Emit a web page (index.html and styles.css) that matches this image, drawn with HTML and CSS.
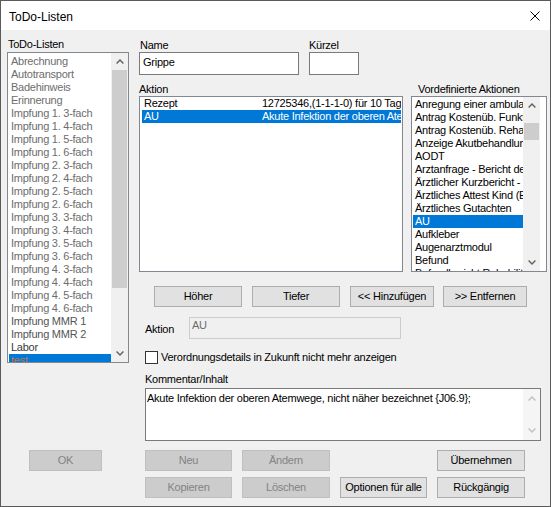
FILE: index.html
```html
<!DOCTYPE html>
<html lang="de">
<head>
<meta charset="utf-8">
<title>ToDo-Listen</title>
<link rel="stylesheet" href="styles.css">
</head>
<body>
<div class="window">
  <div class="titlebar">
    <span class="title">ToDo-Listen</span>
    <svg class="close" width="10" height="10" viewBox="0 0 10 10"><path d="M0.5 0.5 L9.5 9.5 M9.5 0.5 L0.5 9.5" stroke="#000" stroke-width="1" fill="none"/></svg>
  </div>
  <div class="main">
    <div class="left">
      <div class="label left-label">ToDo-Listen</div>
      <div class="listbox todo-list">
        <div class="items todo-items">
          <div class="item">Abrechnung</div>
          <div class="item">Autotransport</div>
          <div class="item">Badehinweis</div>
          <div class="item">Erinnerung</div>
          <div class="item">Impfung 1. 3-fach</div>
          <div class="item">Impfung 1. 4-fach</div>
          <div class="item">Impfung 1. 5-fach</div>
          <div class="item">Impfung 1. 6-fach</div>
          <div class="item">Impfung 2. 3-fach</div>
          <div class="item">Impfung 2. 4-fach</div>
          <div class="item">Impfung 2. 5-fach</div>
          <div class="item">Impfung 2. 6-fach</div>
          <div class="item">Impfung 3. 3-fach</div>
          <div class="item">Impfung 3. 4-fach</div>
          <div class="item">Impfung 3. 5-fach</div>
          <div class="item">Impfung 3. 6-fach</div>
          <div class="item">Impfung 4. 3-fach</div>
          <div class="item">Impfung 4. 4-fach</div>
          <div class="item">Impfung 4. 5-fach</div>
          <div class="item">Impfung 4. 6-fach</div>
          <div class="item dark1">Impfung MMR 1</div>
          <div class="item dark1">Impfung MMR 2</div>
          <div class="item dark2">Labor</div>
          <div class="item sel sel-test">test</div>
        </div>
        <div class="sb">
          <div class="sb-btn"><svg width="8" height="5" viewBox="0 0 8 5"><polyline points="0.6,4.4 4,1 7.4,4.4" fill="none" stroke="#606060" stroke-width="1.4"/></svg></div>
          <div class="sb-track"><div class="thumb thumb-left"></div></div>
          <div class="sb-btn"><svg width="8" height="5" viewBox="0 0 8 5"><polyline points="0.6,0.6 4,4 7.4,0.6" fill="none" stroke="#606060" stroke-width="1.4"/></svg></div>
        </div>
      </div>
      <div class="btn disabled ok-btn">OK</div>
    </div>

    <div class="right">
      <div class="row1">
        <div class="field name-field">
          <div class="label">Name</div>
          <div class="input name-input">Grippe</div>
        </div>
        <div class="field kuerzel-field">
          <div class="label">Kürzel</div>
          <div class="input kuerzel-input"></div>
        </div>
      </div>

      <div class="row2">
        <div class="field aktion-field">
          <div class="label">Aktion</div>
          <div class="listbox aktion-list">
            <div class="lv-row">
              <span class="lv-c1">Rezept</span>
              <span class="lv-c2">12725346,(1-1-1-0) für 10 Tage</span>
            </div>
            <div class="lv-row sel">
              <span class="lv-c1">AU</span>
              <span class="lv-c2">Akute Infektion der oberen Atemwege, nicht näher bezeichnet</span>
            </div>
          </div>
        </div>
        <div class="field vordef-field">
          <div class="label vordef-label">Vordefinierte Aktionen</div>
          <div class="listbox vordef-list">
            <div class="items vordef-items">
              <div class="item">Anregung einer ambulanten Rehabilitation</div>
              <div class="item">Antrag Kostenüb. Funktionstraining</div>
              <div class="item">Antrag Kostenüb. Rehasport</div>
              <div class="item">Anzeige Akutbehandlung</div>
              <div class="item">AODT</div>
              <div class="item">Arztanfrage - Bericht des Arztes</div>
              <div class="item">Ärztlicher Kurzbericht - Befund</div>
              <div class="item">Ärztliches Attest Kind (Erkrankung)</div>
              <div class="item">Ärztliches Gutachten</div>
              <div class="item sel">AU</div>
              <div class="item">Aufkleber</div>
              <div class="item">Augenarztmodul</div>
              <div class="item">Befund</div>
              <div class="item">Befundbericht Rehabilitation</div>
            </div>
            <div class="sb">
              <div class="sb-btn"><svg width="8" height="5" viewBox="0 0 8 5"><polyline points="0.6,4.4 4,1 7.4,4.4" fill="none" stroke="#606060" stroke-width="1.4"/></svg></div>
              <div class="sb-track"><div class="thumb thumb-vordef"></div></div>
              <div class="sb-btn"><svg width="8" height="5" viewBox="0 0 8 5"><polyline points="0.6,0.6 4,4 7.4,0.6" fill="none" stroke="#606060" stroke-width="1.4"/></svg></div>
            </div>
          </div>
        </div>
      </div>

      <div class="row3">
        <div class="btn w88">Höher</div>
        <div class="btn w88 gap10">Tiefer</div>
        <div class="btn w84 gap10">&lt;&lt; Hinzufügen</div>
        <div class="btn w84 gap9">&gt;&gt; Entfernen</div>
      </div>

      <div class="row4">
        <div class="aktion-label">Aktion</div>
        <div class="input disabled-input">AU</div>
      </div>

      <div class="row5">
        <div class="checkbox"></div>
        <span class="check-text">Verordnungsdetails in Zukunft nicht mehr anzeigen</span>
      </div>

      <div class="label komm-label">Kommentar/Inhalt</div>
      <div class="textarea">
        <div class="ta-text">Akute Infektion der oberen Atemwege, nicht näher bezeichnet {J06.9};</div>
        <div class="sb ta-sb">
          <div class="sb-btn"><svg width="8" height="5" viewBox="0 0 8 5"><polyline points="0.6,4.4 4,1 7.4,4.4" fill="none" stroke="#c0c0c0" stroke-width="1.4"/></svg></div>
          <div class="sb-track"></div>
          <div class="sb-btn"><svg width="8" height="5" viewBox="0 0 8 5"><polyline points="0.6,0.6 4,4 7.4,0.6" fill="none" stroke="#c0c0c0" stroke-width="1.4"/></svg></div>
        </div>
      </div>

      <div class="bottom-grid">
        <div class="btn disabled">Neu</div>
        <div class="btn disabled">Ändern</div>
        <div class="empty"></div>
        <div class="btn">Übernehmen</div>
        <div class="btn disabled">Kopieren</div>
        <div class="btn disabled">Löschen</div>
        <div class="btn">Optionen für alle</div>
        <div class="btn">Rückgängig</div>
      </div>
    </div>
  </div>
</div>
</body>
</html>
```

FILE: styles.css
```css
html, body {
  margin: 0;
  padding: 0;
  background: #f0f0f0;
}

.window {
  width: 551px;
  height: 507px;
  box-sizing: border-box;
  border: 1px solid #5a5a5a;
  background: #f0f0f0;
  font-family: "Liberation Sans", Arial, sans-serif;
  font-size: 11px;
  letter-spacing: -0.25px;
  color: #000;
  overflow: hidden;
}

.titlebar {
  height: 29px;
  background: #fff;
  display: flex;
  align-items: center;
  justify-content: space-between;
  padding: 0 10px 0 8px;
  letter-spacing: 0;
}

.title {
  font-size: 12px;
  line-height: 14px;
  padding-top: 2px;
}

.close {
  display: block;
  margin-top: 1px;
}

.main {
  display: flex;
  padding-left: 6px;
}

.left {
  width: 122px;
  padding-top: 8px;
  display: flex;
  flex-direction: column;
}

.label {
  line-height: 13px;
  height: 13px;
  white-space: nowrap;
}

.left-label {
  padding-left: 1px;
}

.listbox {
  box-sizing: border-box;
  border: 1px solid #828790;
  background: #fff;
  display: flex;
  overflow: hidden;
}

.todo-list {
  margin-top: 1px;
  width: 122px;
  height: 311px;
}

.items {
  flex: 1;
  overflow: hidden;
}

.todo-items {
  padding-top: 2px;
  color: #6d6d6d;
}

.item {
  height: 13px;
  line-height: 13px;
  margin-left: 1px;
  padding-left: 2px;
  white-space: nowrap;
  overflow: hidden;
}

.item.dark1 {
  color: #555;
}

.item.dark2 {
  color: #3a3a3a;
}

.sel {
  background: #0078d7;
  color: #fff;
}

.item.sel-test {
  color: #c2763e;
}

.sb {
  width: 17px;
  flex: none;
  background: #f0f0f0;
  display: flex;
  flex-direction: column;
}

.sb-btn {
  height: 17px;
  display: flex;
  align-items: center;
  justify-content: center;
  flex: none;
}

.sb-btn svg {
  display: block;
}

.sb-track {
  flex: 1;
}

.thumb {
  background: #cdcdcd;
  margin: 0 1px;
}

.thumb-left {
  height: 218px;
}

.thumb-vordef {
  margin-top: 9px;
  height: 17px;
}

.ok-btn {
  margin-top: 87px;
  margin-left: 22px;
  width: 73px;
}

.right {
  margin-left: 10px;
  width: 408px;
  padding-top: 9px;
  display: flex;
  flex-direction: column;
}

.row1 {
  display: flex;
  gap: 10px;
}

.name-field .label {
  padding-left: 1px;
}

.input {
  box-sizing: border-box;
  border: 1px solid #7a7a7a;
  background: #fff;
  height: 23px;
  line-height: 13px;
  padding: 3px 3px 0 3px;
  white-space: nowrap;
  overflow: hidden;
}

.name-input {
  width: 160px;
}

.kuerzel-input {
  width: 50px;
}

.row2 {
  margin-top: 8px;
  display: flex;
  gap: 8px;
}

.aktion-list {
  width: 264px;
  height: 176px;
  flex-direction: column;
}

.lv-row {
  display: flex;
  height: 13px;
  line-height: 13px;
  margin: 0 1px 0 2px;
  white-space: nowrap;
  overflow: hidden;
}

.lv-c1 {
  width: 118px;
  flex: none;
  padding-left: 2px;
}

.lv-c2 {
  flex: 1;
  overflow: hidden;
}

.vordef-label {
  padding-left: 7px;
}

.vordef-list {
  width: 136px;
  height: 176px;
  padding-right: 6px;
}

.vordef-items {
  padding-top: 1px;
}

.row3 {
  margin-top: 14px;
  margin-left: 15px;
  display: flex;
}

.btn {
  box-sizing: border-box;
  height: 21px;
  border: 1px solid #adadad;
  background: #e1e1e1;
  display: flex;
  align-items: center;
  justify-content: center;
  white-space: nowrap;
  line-height: 13px;
}

.btn.disabled {
  background: #cccccc;
  border-color: #bfbfbf;
  color: #838383;
}

.w88 {
  width: 88px;
}

.w84 {
  width: 84px;
}

.gap10 {
  margin-left: 10px;
}

.gap9 {
  margin-left: 9px;
}

.row4 {
  margin-top: 10px;
  margin-left: 6px;
  display: flex;
  align-items: center;
}

.aktion-label {
  width: 44px;
  line-height: 13px;
  padding-top: 2px;
}

.disabled-input {
  width: 212px;
  height: 22px;
  border-color: #cccccc;
  background: #f0f0f0;
  color: #6d6d6d;
  padding: 1px 2px 0 2px;
}

.row5 {
  margin-top: 12px;
  margin-left: 6px;
  display: flex;
  align-items: center;
  height: 13px;
}

.checkbox {
  box-sizing: border-box;
  width: 13px;
  height: 13px;
  border: 1px solid #333;
  background: #fff;
  flex: none;
}

.check-text {
  margin-left: 3px;
  line-height: 13px;
}

.komm-label {
  margin-top: 9px;
  margin-left: 6px;
}

.textarea {
  box-sizing: border-box;
  margin-top: 2px;
  margin-left: 6px;
  width: 396px;
  height: 53px;
  border: 1px solid #7a7a7a;
  background: #fff;
  display: flex;
}

.ta-text {
  flex: 1;
  padding: 3px 0 0 1px;
  line-height: 13px;
  white-space: nowrap;
  overflow: hidden;
}

.ta-sb {
  background: #f5f5f5;
  padding: 1px 0;
}

.bottom-grid {
  margin-top: 9px;
  margin-left: 6px;
  display: grid;
  grid-template-columns: 87px 88px 87px 88px;
  grid-template-rows: 21px 21px;
  column-gap: 10px;
  row-gap: 6px;
}
```
